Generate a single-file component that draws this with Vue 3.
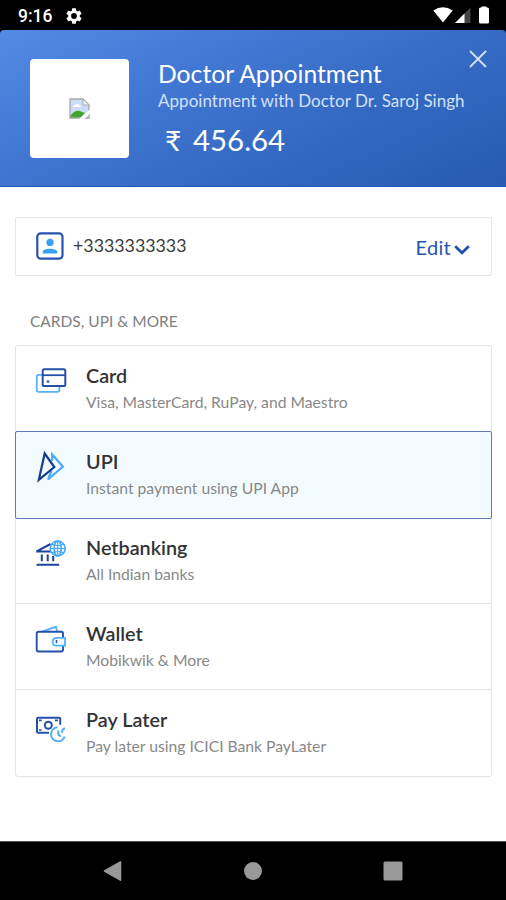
<script setup>
const methods = [
  { id: 'card', title: 'Card', sub: 'Visa, MasterCard, RuPay, and Maestro' },
  { id: 'upi', title: 'UPI', sub: 'Instant payment using UPI App' },
  { id: 'bank', title: 'Netbanking', sub: 'All Indian banks' },
  { id: 'wallet', title: 'Wallet', sub: 'Mobikwik & More' },
  { id: 'later', title: 'Pay Later', sub: 'Pay later using ICICI Bank PayLater' },
]
</script>

<template>
  <div class="screen">
    <div class="status">
      <span class="time">9:16</span>
      <svg class="gear" width="16" height="16" viewBox="2 2 20 20"><path fill="#fff" d="M19.14 12.94c.04-.3.06-.61.06-.94 0-.32-.02-.64-.07-.94l2.03-1.58a.49.49 0 0 0 .12-.61l-1.92-3.32a.488.488 0 0 0-.59-.22l-2.39.96c-.5-.38-1.03-.7-1.62-.94l-.36-2.54a.484.484 0 0 0-.48-.41h-3.84c-.24 0-.43.17-.47.41l-.36 2.54c-.59.24-1.13.57-1.62.94l-2.39-.96c-.22-.08-.47 0-.59.22L2.74 8.87c-.12.21-.08.47.12.61l2.03 1.58c-.05.3-.09.63-.09.94s.02.64.07.94l-2.03 1.58a.49.49 0 0 0-.12.61l1.92 3.32c.12.22.37.29.59.22l2.39-.96c.5.38 1.03.7 1.62.94l.36 2.54c.05.24.24.41.48.41h3.84c.24 0 .44-.17.47-.41l.36-2.54c.59-.24 1.13-.56 1.62-.94l2.39.96c.22.08.47 0 .59-.22l1.92-3.32c.12-.22.07-.47-.12-.61zM12 15.6a3.6 3.6 0 1 1 0-7.2 3.6 3.6 0 0 1 0 7.2z"/></svg>
      <svg class="signals" width="60" height="20" viewBox="0 0 60 20">
        <path fill="#fff" d="M.3 4.6Q10 -2 19.7 4.6L10 16.5Z"/>
        <path fill="#444" d="M37.5 1.5V17H22Z"/>
        <path fill="#fff" d="M31.5 7.5V17H22Z"/>
        <path fill="#fff" d="M48.5 1.5V.5h5v1h1q1.500 0 1.500 1.500v13q0 1.500-1.500 1.500h-7q-1.500 0-1.500-1.500V3q0-1.500 1.500-1.500z"/>
      </svg>
    </div>

    <header class="header">
      <div class="logo">
        <svg width="21" height="21" viewBox="0 0 21 21">
          <path d="M1 1h13l6 6v13H1z" fill="#cbdcf8"/>
          <path d="M1 20v-2q6-8 12-4l3 1-5 5z" fill="#43a52d"/>
          <path d="M4 9q0-2 2-2 2-3 4 0 2 0 2 2z" fill="#fff"/>
          <path d="M1 20V1h13l6 6v13z" fill="none" stroke="#a8a8a8" stroke-width="1.300"/>
          <path d="M14 1v6h6z" fill="#f5f5f5" stroke="#a8a8a8"/>
          <path d="M9.500 21.500L21.500 11v4l-7 6.500z" fill="#fff"/>
        </svg>
      </div>
      <div class="info">
        <div class="name">Doctor Appointment</div>
        <div class="desc">Appointment with Doctor Dr. Saroj Singh</div>
        <div class="amount"><span class="rupee">₹</span>456.64</div>
      </div>
      <svg class="close" width="18" height="18" viewBox="0 0 18 18"><path d="M1 1l16 16M17 1L1 17" stroke="#d0def6" stroke-width="1.900"/></svg>
    </header>

    <main class="body">
      <div class="contact">
        <svg class="person" width="28" height="28" viewBox="0 0 28 28">
          <rect x="1.300" y="1.300" width="25.200" height="25.400" rx="3.500" fill="none" stroke="#2653ae" stroke-width="2.200"/>
          <circle cx="14" cy="10.400" r="3.600" fill="#36a1f5"/>
          <path d="M6.700 21.500v-1.400c0-4.400 14.600-4.400 14.600 0v1.400z" fill="#36a1f5"/>
        </svg>
        <span class="phone">+3333333333</span>
        <span class="edit">Edit</span>
        <svg class="chev" width="16" height="10" viewBox="0 0 16 10"><path d="M1.200 1.200L8 7.800l6.800-6.600" fill="none" stroke="#1d50ad" stroke-width="2.700"/></svg>
      </div>

      <div class="label">CARDS, UPI &amp; MORE</div>

      <div class="list">
        <div v-for="m in methods" :key="m.id" class="row" :class="{ active: m.id === 'upi' }">
          <svg class="icon" width="34" height="34" viewBox="0 0 34 34" fill="none" stroke-width="1.800">
            <g v-if="m.id === 'card'">
              <path d="M8 10.900H4.500q-1.700 0-1.700 1.700v13.500q0 1.700 1.700 1.700h19.200q1.700 0 1.700-1.700V23" stroke="#55b3fa"/>
              <rect x="8.700" y="5.200" width="22.600" height="16.900" rx="1.600" stroke="#2450a8" stroke-width="2"/>
              <path d="M9 11.200h22" stroke="#2450a8"/>
              <circle cx="14" cy="17.500" r="1.600" fill="#4777c8"/>
            </g>
            <g v-else-if="m.id === 'upi'" stroke-width="2.200">
              <path d="M18.200 11V4.500l10.700 12.200L14 29.500l3.500-8.500" stroke="#4aabf7"/>
              <path d="M10.700 3.500L20.300 17 4.800 29.800z" stroke="#153c91"/>
            </g>
            <g v-else-if="m.id === 'bank'">
              <path d="M16.500 8L3.200 15v.6h14.500M7.800 18.500v6.700M13.700 18.500v6.700M19.200 20v5.200M2.500 28.800h22.700" stroke="#1b439b" stroke-width="2"/>
              <g stroke="#46a8f5" stroke-width="1.600">
                <circle cx="23.700" cy="12.500" r="7.500" fill="#f0faff"/>
                <ellipse cx="23.700" cy="12.500" rx="3.500" ry="7.500"/>
                <path d="M16.200 12.500h15M23.700 5v15M18 8.200q5.700 2.500 11.400 0M18 16.800q5.700-2.500 11.400 0" stroke-width="1.100"/>
              </g>
            </g>
            <g v-else-if="m.id === 'wallet'">
              <path d="M8 9.700L22 4.800l1 4.900" stroke="#51b2fb"/>
              <path d="M29 15v-3.300q0-1.900-1.900-1.900H4.600q-1.900 0-1.900 1.900v15.900q0 1.900 1.900 1.900h22.500q1.900 0 1.900-1.900V24" stroke="#2551ad" stroke-width="1.900"/>
              <path d="M31 15.800h-8.500q-3.900 0-3.900 3.900t3.900 3.900H31z" stroke="#51b2fb"/>
              <path d="M22.500 18v3.200" stroke="#2856ae" stroke-width="1.600"/>
            </g>
            <g v-else>
              <path d="M15 24.700H4q-1 0-1-1V10.800q0-1 1-1h21.200q1 0 1 1v6" stroke="#2450a8" stroke-width="2"/>
              <circle cx="14.300" cy="17.200" r="3.500" stroke="#2450a8" stroke-width="2"/>
              <path d="M5 12.300h2.700M21 12.300h3M5 22h2.700" stroke="#2450a8" stroke-width="1.700"/>
              <path d="M23.500 19.300a7 7 0 1 0 7.200 9.300M24.300 22.500v4l2.500 2M31 20.500q-3.500.2-2.700 4.300" stroke="#46acf7" stroke-width="1.900"/>
            </g>
          </svg>
          <div class="text">
            <div class="title">{{ m.title }}</div>
            <div class="sub">{{ m.sub }}</div>
          </div>
        </div>
      </div>
    </main>

    <nav class="nav">
      <svg width="20" height="22" viewBox="0 0 20 22"><path d="M1.500 11L17.500 1.800v18.400z" fill="#999" stroke="#999" stroke-width="1.500" stroke-linejoin="round"/></svg>
      <svg width="20" height="20" viewBox="0 0 20 20"><circle cx="10" cy="10" r="9" fill="#999"/></svg>
      <svg width="20" height="20" viewBox="0 0 20 20"><rect x=".5" y=".5" width="19" height="19" rx="1.500" fill="#999"/></svg>
    </nav>
  </div>
</template>

<style>
body { margin: 0; background: #fff; }
</style>

<style scoped>
.screen { width: 506px; height: 900px; display: flex; flex-direction: column; background: #000; font-family: Lato, sans-serif; overflow: hidden; box-sizing: border-box; }
.screen * { box-sizing: border-box; }
svg { display: block; flex: none; }
.status { height: 30px; flex: none; display: flex; padding: 0 13px 0 18px; align-items: flex-start; }
.time { font: 500 17.5px/20px Roboto, sans-serif; color: #fff; width: 48px; padding-top: 6px; white-space: nowrap; }
.gear { margin-top: 8px; }
.signals { margin: 6px 0 0 auto; }
.header { height: 157px; flex: none; display: flex; padding: 29px 19px 0 30px; border-radius: 4px 4px 0 0; border-bottom: 1px solid #2058b7; background: linear-gradient(155deg, #528ae4 0%, #3b70cb 48%, #265bb1 100%); color: #fff; }
.logo { width: 99px; height: 99px; flex: none; background: #fff; border-radius: 4px; display: grid; place-items: center; }
.info { margin-left: 29px; flex: 1; white-space: nowrap; }
.name { font-size: 24.7px; line-height: 30px; }
.desc { font-size: 17px; line-height: 22px; letter-spacing: 0.04px; padding-top: 1px; color: #d3e1f9; }
.amount { font-size: 29.4px; line-height: 36px; margin-top: 10px; padding-left: 7px; display: flex; }
.rupee { width: 28px; font-size: 28px; }
.close { margin-top: -9px; }
.body { flex: 1; background: #fff; padding: 30px 14px 0 15px; }
.contact { height: 59px; border: 1.5px solid #e6e6e6; border-radius: 2px; display: flex; align-items: center; padding: 0 21px 0 20px; color: #3a3a3a; }
.person { margin-top: -1px; }
.phone { font-size: 17.8px; margin-left: 9px; line-height: 24px; padding-bottom: 3px; }
.edit { font-size: 20px; letter-spacing: 0.3px; color: #2755ae; margin-left: auto; line-height: 24px; }
.chev { margin: 6px 0 0 3px; }
.label { font-size: 15.5px; line-height: 20px; margin: 35px 0 14px 15px; color: #808080; }
.list { border: 1px solid #e3e3e3; border-radius: 3px; height: 432px; }
.row { height: 86px; display: flex; padding: 17px 0 0 18px; border-bottom: 1px solid #e3e3e3; }
.row:last-child { border-bottom: 0; }
.row.active { margin: -1px -1px 0; height: 88px; padding: 17px 0 0 18px; background: #f4fbff; border: 1.5px solid #6078b8; border-radius: 2px; margin-bottom: -1px; }
.icon { margin-top: 1px; }
.text { margin-left: 18px; }
.title { font-size: 19.8px; line-height: 24px; font-weight: 600; color: #333; }
.sub { font-size: 15.7px; line-height: 20px; margin-top: 5px; color: #888; }
.nav { height: 59px; flex: none; border-top: 1px solid #555; background: #000; display: flex; justify-content: space-between; padding: 0 103px 1px; align-items: center; }
</style>
